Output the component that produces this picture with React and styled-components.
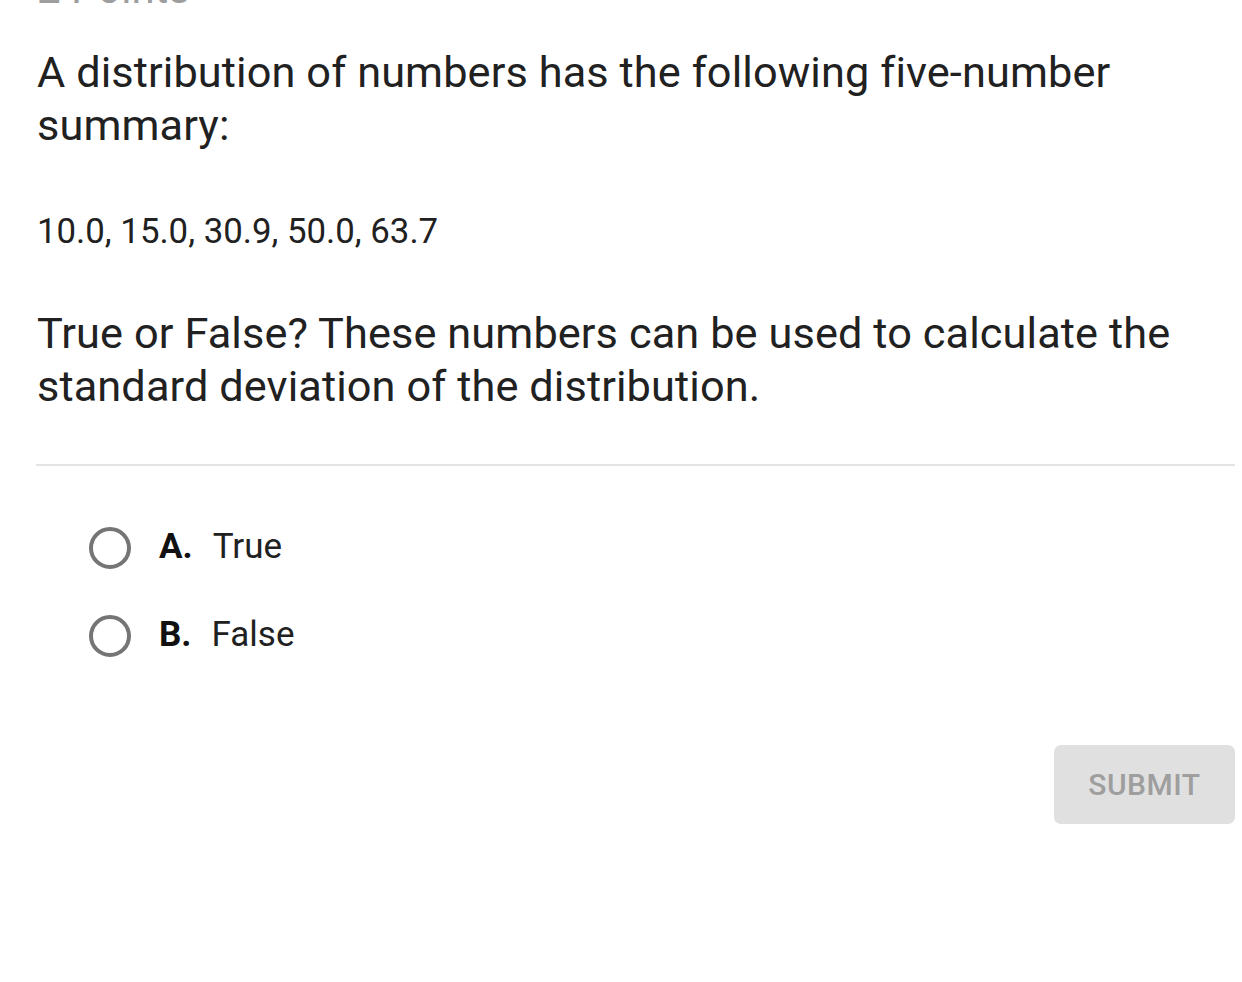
import React from "react";
import styled, { createGlobalStyle } from "styled-components";

const Global = createGlobalStyle`
  html, body { margin: 0; padding: 0; background: #fff; }
  body { font-family: Roboto, "Liberation Sans", sans-serif; color: #212121; }
`;

const Page = styled.div`
  width: 1242px;
  height: 982px;
  overflow: hidden;
  padding: 0 7px 0 37px;
  box-sizing: border-box;
`;

const Points = styled.div`
  font-size: 42px;
  line-height: 40px;
  height: 40px;
  color: #9e9e9e;
  margin-top: -31px;
`;

const Question = styled.p`
  font-size: 43.3px;
  line-height: 53px;
  letter-spacing: 0.1px;
  margin: ${(p) => p.$top}px 0 0;
`;

const Numbers = styled.p`
  font-size: 34.8px;
  line-height: 40px;
  margin: 59px 0 0;
`;

const Divider = styled.hr`
  border: none;
  height: 2px;
  background: #e4e4e4;
  margin: 51px 0 0 -1px;
`;

const Options = styled.div`
  display: flex;
  flex-direction: column;
  gap: 45px;
  margin-top: 59px;
  padding-left: 52px;
`;

const Option = styled.label`
  display: flex;
  align-items: center;
  gap: 28px;
  font-size: 35px;
  line-height: 43px;
`;

const Radio = styled.span`
  width: 42px;
  height: 42px;
  box-sizing: border-box;
  border: 4px solid #757575;
  border-radius: 50%;
  flex: none;
  position: relative;
  top: 1px;
`;

const Letter = styled.b`
  font-weight: 700;
  margin-right: 20px;
  color: #111;
`;

const Footer = styled.div`
  display: flex;
  justify-content: flex-end;
  margin-top: 89px;
`;

const Submit = styled.button`
  width: 181px;
  height: 79px;
  border: none;
  border-radius: 7px;
  background: #e0e0e0;
  color: #9e9e9e;
  font-family: Roboto, "Liberation Sans", sans-serif;
  font-size: 30px;
  font-weight: 500;
  letter-spacing: 0.5px;
`;

export default function App() {
  return (
    <>
      <Global />
      <Page>
        <Points>2 Points</Points>
        <Question $top={37}>
          A distribution of numbers has the following five-number summary:
        </Question>
        <Numbers>10.0, 15.0, 30.9, 50.0, 63.7</Numbers>
        <Question $top={56}>
          True or False? These numbers can be used to calculate the standard deviation of the distribution.
        </Question>
        <Divider />
        <Options>
          <Option>
            <Radio />
            <span><Letter>A.</Letter>True</span>
          </Option>
          <Option>
            <Radio />
            <span><Letter>B.</Letter>False</span>
          </Option>
        </Options>
        <Footer>
          <Submit>SUBMIT</Submit>
        </Footer>
      </Page>
    </>
  );
}
